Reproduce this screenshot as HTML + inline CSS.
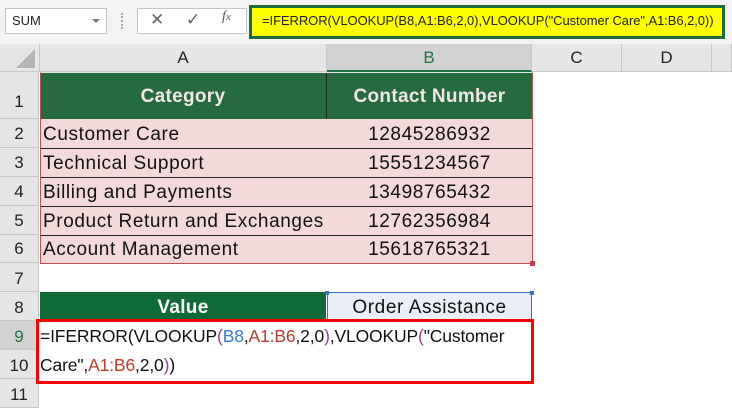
<!DOCTYPE html>
<html><head><meta charset="utf-8"><style>
*{margin:0;padding:0;box-sizing:border-box}
body{width:732px;height:408px;overflow:hidden;background:#fff;position:relative;font-family:"Liberation Sans",sans-serif}
.a{position:absolute}
.rh{position:absolute;left:0;width:39px;background:#e6e6e6;border-bottom:1px solid #c8c8c8;border-right:1px solid #c8c8c8;color:#222;font-size:17px;text-align:center}
.ch{position:absolute;top:44px;height:28px;background:#e6e6e6;border-right:1px solid #c8c8c8;border-bottom:1px solid #c8c8c8;font-size:17px;text-align:center;line-height:28px;color:#222}
.cell{position:absolute;font-size:19px;color:#111;white-space:nowrap;letter-spacing:0.6px}
.b{color:#3c78d8}.r{color:#c0392b}.p{color:#a03c8c}
</style></head><body>
<div class="a" style="left:0;top:0;width:732px;height:44px;background:#f3f3f3"></div>
<div class="a" style="left:5px;top:8px;width:102px;height:26px;background:#fff;border:1px solid #c6c6c6;font-size:13px;line-height:24px;padding-left:6px;color:#222">SUM</div>
<div class="a" style="left:92px;top:19px;width:0;height:0;border-left:4px solid transparent;border-right:4px solid transparent;border-top:4px solid #777"></div>
<div class="a" style="left:121px;top:13px;width:2px;height:16px;border-left:2px dotted #aaa"></div>
<div class="a" style="left:137px;top:8px;width:110px;height:26px;background:#fff;border:1px solid #c6c6c6"></div>
<div class="a" style="left:150px;top:10px;font-size:17px;color:#666">✕</div>
<div class="a" style="left:186px;top:10px;font-size:17px;color:#666">✓</div>
<div class="a" style="left:222px;top:9px;font-size:14px;color:#555;font-family:'Liberation Serif',serif;font-style:italic">f<span style="font-size:11px">x</span></div>
<div class="a" style="left:249px;top:5px;width:476px;height:34px;background:#ffff00;border:3px solid #1e6b3c"></div>
<div class="a" style="left:262px;top:13px;font-size:13px;color:#222;white-space:nowrap;letter-spacing:-0.07px">=IFERROR(VLOOKUP(B8,A1:B6,2,0),VLOOKUP("Customer Care",A1:B6,2,0))</div>
<div class="a" style="left:0;top:44px;width:40px;height:28px;background:#e6e6e6;border-right:1px solid #c8c8c8;border-bottom:1px solid #c8c8c8"></div>
<div class="a" style="left:16px;top:49px;width:0;height:0;border-left:19px solid transparent;border-bottom:19px solid #b4b4b4"></div>
<div class="ch" style="left:40px;width:287px">A</div>
<div class="ch" style="left:327px;width:205px;background:#d2d2d2;border-bottom:2px solid #217346;color:#217346">B</div>
<div class="ch" style="left:532px;width:90px">C</div>
<div class="ch" style="left:622px;width:90px">D</div>
<div class="ch" style="left:712px;width:20px"></div>
<div class="rh" style="top:72px;height:47px;line-height:60px">1</div>
<div class="rh" style="top:119px;height:29px;line-height:29px">2</div>
<div class="rh" style="top:148px;height:29px;line-height:29px">3</div>
<div class="rh" style="top:177px;height:29px;line-height:29px">4</div>
<div class="rh" style="top:206px;height:29px;line-height:29px">5</div>
<div class="rh" style="top:235px;height:28px;line-height:28px">6</div>
<div class="rh" style="top:263px;height:29px;line-height:31px">7</div>
<div class="rh" style="top:292px;height:29px;line-height:31px">8</div>
<div class="rh" style="top:321px;height:29px;line-height:31px;background:#d2d2d2;color:#217346">9</div>
<div class="rh" style="top:350px;height:29px;line-height:31px">10</div>
<div class="rh" style="top:379px;height:29px;line-height:31px">11</div>
<div class="a" style="left:40px;top:72px;width:492px;height:47px;background:#256b3e"></div>
<div class="a" style="left:326px;top:72px;width:1px;height:191px;background:#222"></div>
<div class="a" style="left:40px;top:119px;width:492px;height:144px;background:#f3d9d9"></div>
<div class="a" style="left:40px;top:148px;width:492px;height:1px;background:#222"></div>
<div class="a" style="left:40px;top:177px;width:492px;height:1px;background:#222"></div>
<div class="a" style="left:40px;top:206px;width:492px;height:1px;background:#222"></div>
<div class="a" style="left:40px;top:235px;width:492px;height:1px;background:#222"></div>
<div class="a" style="left:40px;top:72px;width:493px;height:192px;border:1px solid #c0504d;border-top-color:#e8e8e8"></div>
<div class="a" style="left:530px;top:261px;width:5px;height:5px;background:#c0404d"></div>
<div class="cell" style="left:40px;width:286px;top:86px;text-align:center;color:#f2e6e6;font-weight:bold;letter-spacing:0.3px">Category</div>
<div class="cell" style="left:327px;width:205px;top:86px;text-align:center;color:#f2e6e6;font-weight:bold;letter-spacing:0.3px">Contact Number</div>
<div class="cell" style="left:43px;top:124px">Customer Care</div>
<div class="cell" style="left:43px;top:153px">Technical Support</div>
<div class="cell" style="left:43px;top:182px">Billing and Payments</div>
<div class="cell" style="left:43px;top:211px">Product Return and Exchanges</div>
<div class="cell" style="left:43px;top:239px">Account Management</div>
<div class="cell" style="left:327px;width:205px;text-align:center;top:124px">12845286932</div>
<div class="cell" style="left:327px;width:205px;text-align:center;top:153px">15551234567</div>
<div class="cell" style="left:327px;width:205px;text-align:center;top:182px">13498765432</div>
<div class="cell" style="left:327px;width:205px;text-align:center;top:211px">12762356984</div>
<div class="cell" style="left:327px;width:205px;text-align:center;top:239px">15618765321</div>
<div class="a" style="left:40px;top:292px;width:286px;height:28px;background:#0e6b37"></div>
<div class="cell" style="left:40px;width:286px;top:297px;text-align:center;color:#fff;font-weight:bold;letter-spacing:0.3px">Value</div>
<div class="a" style="left:327px;top:292px;width:205px;height:28px;background:#e9eef7;border:1px solid #3a70c8;border-bottom:none"></div>
<div class="a" style="left:325px;top:291px;width:4px;height:4px;background:#3a70c8"></div>
<div class="a" style="left:530px;top:291px;width:4px;height:4px;background:#3a70c8"></div>
<div class="cell" style="left:327px;width:205px;top:297px;text-align:center">Order Assistance</div>
<div class="a" style="left:36px;top:319px;width:498px;height:65px;border:3px solid #ff0000;background:#fff"></div>
<div class="cell" style="left:40px;top:326px;font-size:17.5px;letter-spacing:-0.15px">=IFERROR(VLOOKUP<span class="p">(</span><span class="b">B8</span>,<span class="r">A1:B6</span>,2,0<span class="p">)</span>,VLOOKUP<span class="p">(</span>"Customer</div>
<div class="cell" style="left:40px;top:355px;font-size:17.5px;letter-spacing:-0.15px">Care",<span class="r">A1:B6</span>,2,0<span class="p">)</span>)</div>
</body></html>
